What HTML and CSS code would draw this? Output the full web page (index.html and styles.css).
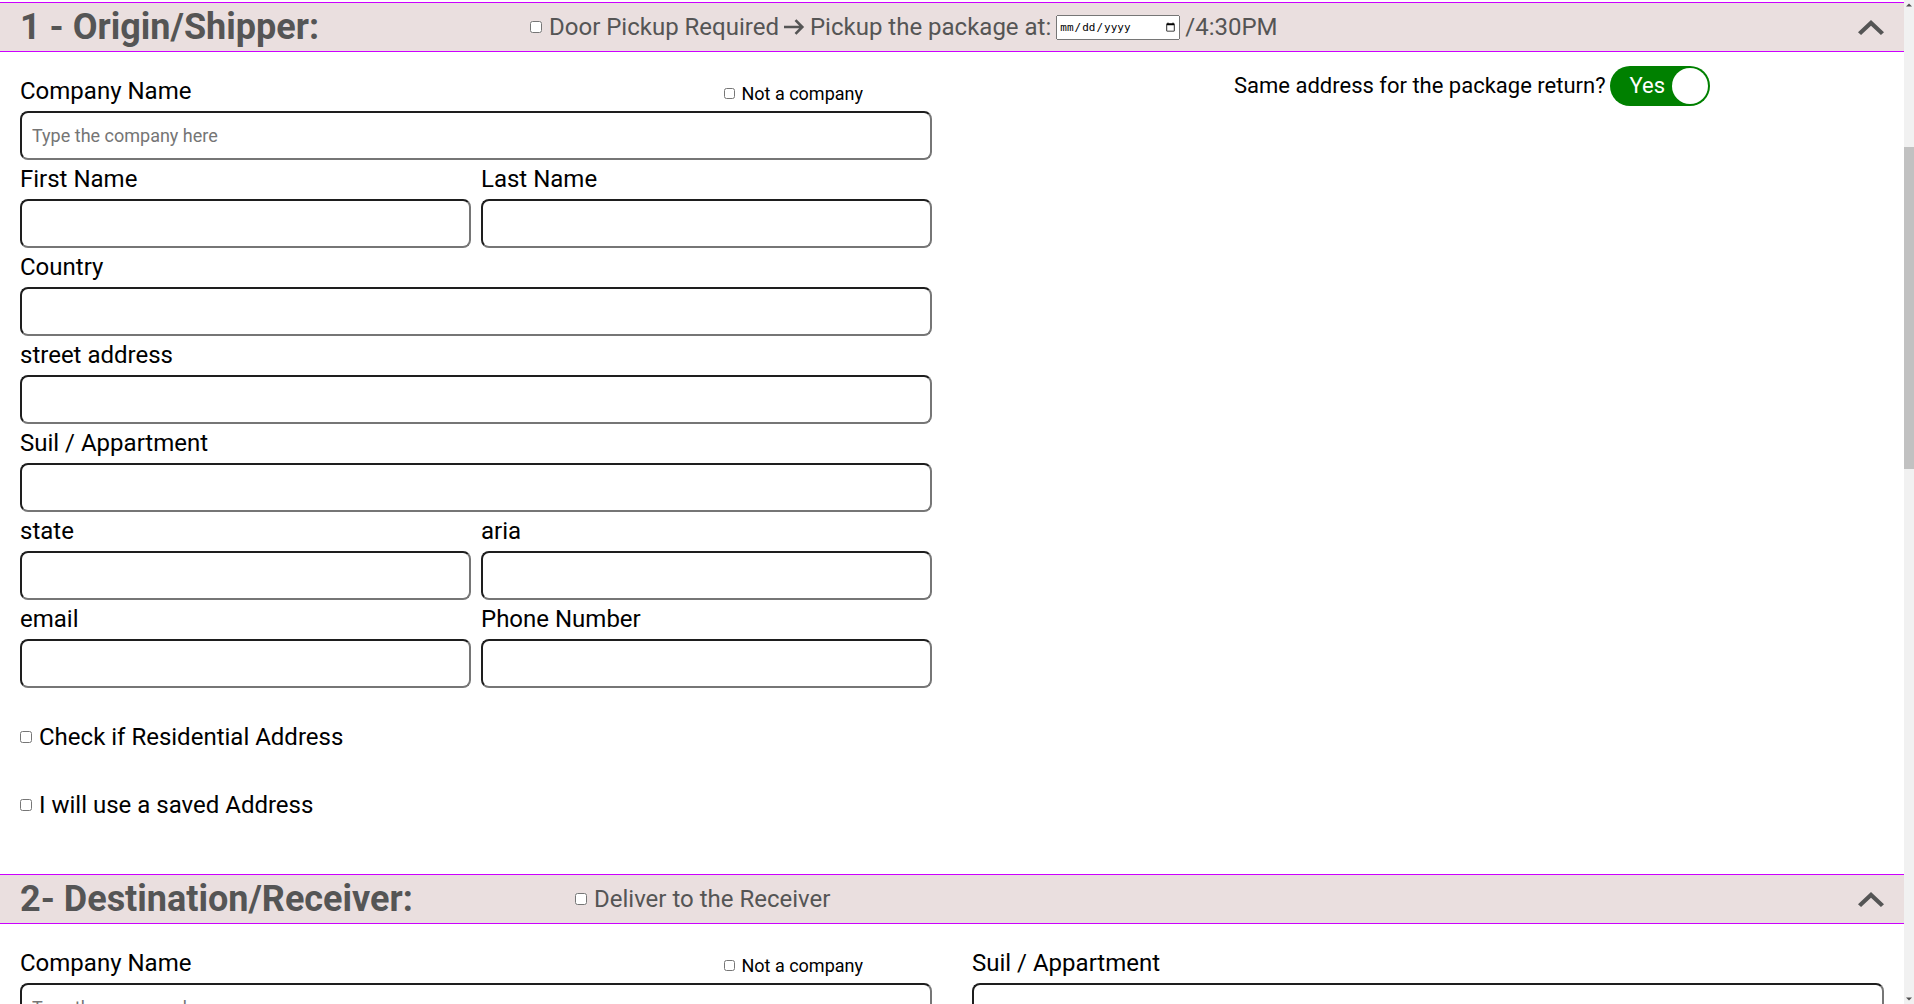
FILE: index.html
```html
<!DOCTYPE html>
<html lang="en">
<head>
<meta charset="utf-8">
<title>Shipment addresses</title>
<link rel="stylesheet" href="styles.css">
</head>
<body>
<div class="shell">
<main class="page">

  <section class="panel">
    <header class="panel-head">
      <h2 class="panel-title title-origin">1 - Origin/Shipper:</h2>
      <div class="head-opts">
        <label class="opt"><input type="checkbox" class="cb">Door Pickup Required</label>
        <svg class="arrow" width="21" height="16" viewBox="0 0 21 16" aria-hidden="true"><path d="M0 8H18.5M11.5 1.2L18.3 8L11.5 14.8" fill="none" stroke="#555" stroke-width="2.6"/></svg>
        <span class="opt-text">Pickup the package at:</span>
        <input type="date" class="date">
        <span class="opt-time">/4:30PM</span>
      </div>
      <button class="collapse" type="button" aria-label="Collapse">
        <svg width="26" height="15" viewBox="6 8 12 7.41" preserveAspectRatio="none" aria-hidden="true"><path d="M12 8l-6 6 1.41 1.41L12 10.83l4.59 4.58L18 14z" fill="#555"/></svg>
      </button>
    </header>

    <div class="panel-body body-origin">
      <div class="col">
        <div class="field">
          <div class="label-row">
            <label class="lbl">Company Name</label>
            <label class="not-company"><input type="checkbox" class="cb">Not a company</label>
          </div>
          <input class="inp" type="text" placeholder="Type the company here">
        </div>
        <div class="pair">
          <div class="field"><label class="lbl">First Name</label><input class="inp" type="text"></div>
          <div class="field"><label class="lbl">Last Name</label><input class="inp" type="text"></div>
        </div>
        <div class="field"><label class="lbl">Country</label><input class="inp" type="text"></div>
        <div class="field"><label class="lbl">street address</label><input class="inp" type="text"></div>
        <div class="field"><label class="lbl">Suil / Appartment</label><input class="inp" type="text"></div>
        <div class="pair">
          <div class="field"><label class="lbl">state</label><input class="inp" type="text"></div>
          <div class="field"><label class="lbl">aria</label><input class="inp" type="text"></div>
        </div>
        <div class="pair">
          <div class="field"><label class="lbl">email</label><input class="inp" type="email"></div>
          <div class="field"><label class="lbl">Phone Number</label><input class="inp" type="tel"></div>
        </div>
        <div class="checks">
          <label class="check-row"><input type="checkbox" class="cb">Check if Residential Address</label>
          <label class="check-row"><input type="checkbox" class="cb">I will use a saved Address</label>
        </div>
      </div>

      <div class="col">
        <div class="same-return">
          <span>Same address for the package return?</span>
          <span class="toggle"><span class="toggle-text">Yes</span><span class="knob"></span></span>
        </div>
      </div>
    </div>
  </section>

  <section class="panel">
    <header class="panel-head">
      <h2 class="panel-title title-dest">2- Destination/Receiver:</h2>
      <div class="head-opts">
        <label class="opt"><input type="checkbox" class="cb">Deliver to the Receiver</label>
      </div>
      <button class="collapse" type="button" aria-label="Collapse">
        <svg width="26" height="15" viewBox="6 8 12 7.41" preserveAspectRatio="none" aria-hidden="true"><path d="M12 8l-6 6 1.41 1.41L12 10.83l4.59 4.58L18 14z" fill="#555"/></svg>
      </button>
    </header>

    <div class="panel-body">
      <div class="col">
        <div class="field">
          <div class="label-row">
            <label class="lbl">Company Name</label>
            <label class="not-company"><input type="checkbox" class="cb">Not a company</label>
          </div>
          <input class="inp" type="text" placeholder="Type the company here">
        </div>
        <div class="pair">
          <div class="field"><label class="lbl">First Name</label><input class="inp" type="text"></div>
          <div class="field"><label class="lbl">Last Name</label><input class="inp" type="text"></div>
        </div>
        <div class="field"><label class="lbl">Country</label><input class="inp" type="text"></div>
        <div class="field"><label class="lbl">street address</label><input class="inp" type="text"></div>
      </div>
      <div class="col">
        <div class="field"><label class="lbl">Suil / Appartment</label><input class="inp" type="text"></div>
        <div class="pair">
          <div class="field"><label class="lbl">state</label><input class="inp" type="text"></div>
          <div class="field"><label class="lbl">aria</label><input class="inp" type="text"></div>
        </div>
        <div class="pair">
          <div class="field"><label class="lbl">email</label><input class="inp" type="email"></div>
          <div class="field"><label class="lbl">Phone Number</label><input class="inp" type="tel"></div>
        </div>
        <div class="checks">
          <label class="check-row"><input type="checkbox" class="cb">Check if Residential Address</label>
          <label class="check-row"><input type="checkbox" class="cb">I will use a saved Address</label>
        </div>
      </div>
    </div>
  </section>

</main>
<div class="rail" aria-hidden="true">
  <svg class="rail-btn" width="10" height="10" viewBox="0 0 10 10"><path d="M2 6.5L5 3.5L8 6.5z" fill="#505050"/></svg>
  <div class="rail-thumb"></div>
  <svg class="rail-btn rail-btn-down" width="10" height="10" viewBox="0 0 10 10"><path d="M2 3.5L5 6.5L8 3.5z" fill="#505050"/></svg>
</div>
</div>
</body>
</html>
```

FILE: styles.css
```css
html, body {
  margin: 0;
  padding: 0;
  height: 100%;
  overflow: hidden;
  background: #ffffff;
}

body {
  font-family: Roboto, "Noto Sans", "Liberation Sans", sans-serif;
  color: #000;
}

.shell {
  display: flex;
  height: 100vh;
}

.page {
  flex: 1;
  min-width: 0;
  overflow-y: auto;
  padding: 2px 0 1560px;
  box-sizing: border-box;
}

/* scroll rail */
.rail {
  flex: none;
  width: 10px;
  display: flex;
  flex-direction: column;
  background: #f1f1f1;
}

.rail-btn {
  display: block;
  flex: none;
}

.rail-thumb {
  height: 322px;
  margin-top: 137px;
  background: #c1c1c1;
}

.rail-btn-down {
  margin-top: auto;
}

/* panel header */
.panel-head {
  display: flex;
  align-items: center;
  height: 48px;
  padding: 0 20px;
  background: #eadfdf;
  border-top: 1px solid #cc00ff;
  border-bottom: 1px solid #cc00ff;
  color: #555;
}

.panel-title {
  margin: 0;
  font-size: 36px;
  font-weight: 700;
  line-height: 42px;
  color: #555;
  flex: none;
}

.title-origin { width: 510px; }
.title-dest { width: 555px; }

.head-opts {
  display: flex;
  align-items: center;
  font-size: 24px;
  line-height: 28px;
  color: #555;
}

.opt {
  display: flex;
  align-items: center;
}

.cb {
  width: 12px;
  height: 12px;
  margin: 0 7px 0 0;
  flex: none;
}

.arrow {
  margin: 0 5px 0 5px;
  flex: none;
}

.date {
  box-sizing: border-box;
  width: 124px;
  height: 25px;
  margin: 0 5px 0 5px;
  font-family: "DejaVu Sans Mono", "Liberation Mono", monospace;
  font-size: 11px;
}

.collapse {
  margin-left: auto;
  padding: 0;
  border: 0;
  background: none;
  display: flex;
  align-items: center;
  cursor: pointer;
}

/* panel body */
.panel-body {
  display: grid;
  grid-template-columns: 1fr 1fr;
  column-gap: 40px;
  padding: 15px 20px 0;
}

.body-origin {
  padding-bottom: 55px;
}

.col {
  display: flex;
  flex-direction: column;
  gap: 5px;
  padding-top: 10px;
  min-width: 0;
}

.body-origin .col + .col {
  padding-top: 0;
  margin-top: -1px;
}

.field {
  display: flex;
  flex-direction: column;
  min-width: 0;
}

.label-row {
  display: flex;
  align-items: baseline;
}

.lbl {
  display: block;
  font-size: 24px;
  line-height: 28px;
  margin-bottom: 6px;
}

.not-company {
  display: flex;
  align-items: center;
  margin-left: auto;
  margin-right: 69px;
  font-size: 18px;
  line-height: 22px;
}

.not-company .cb {
  width: 11px;
  height: 11px;
  margin-right: 6px;
}

.pair {
  display: grid;
  grid-template-columns: 1fr 1fr;
  column-gap: 10px;
}

.inp {
  box-sizing: border-box;
  width: 100%;
  height: 49px;
  margin: 0;
  padding: 0 10px;
  border: 2px solid;
  border-color: #1e1e1e #767676 #767676 #1e1e1e;
  border-radius: 8px;
  background: #fff;
  font-family: Roboto, "Liberation Sans", sans-serif;
  font-size: 18px;
  color: #000;
}

.inp::placeholder {
  color: #757575;
}

.checks {
  display: flex;
  flex-direction: column;
  gap: 40px;
  margin-top: 30px;
}

.check-row {
  display: flex;
  align-items: center;
  height: 28px;
  font-size: 24px;
  line-height: 28px;
}

.same-return {
  display: flex;
  align-items: center;
  gap: 4px;
  margin-left: 262px;
  font-size: 22px;
  line-height: 26px;
}

.toggle {
  box-sizing: border-box;
  display: flex;
  align-items: center;
  justify-content: space-between;
  width: 100px;
  height: 40px;
  padding: 0 2px 0 20px;
  border-radius: 20px;
  background: #008000;
  flex: none;
}

.toggle-text {
  color: #fff;
  font-size: 22px;
  line-height: 26px;
}

.knob {
  width: 36px;
  height: 36px;
  border-radius: 50%;
  background: #fff;
}
```
